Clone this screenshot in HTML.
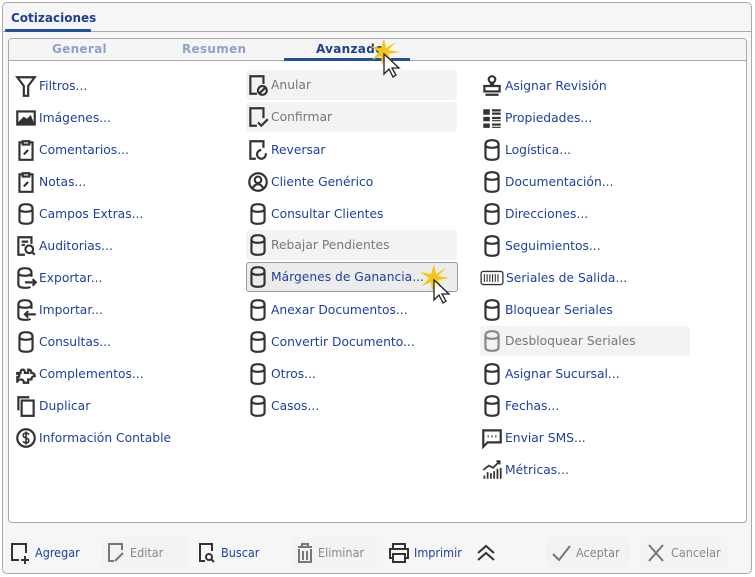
<!DOCTYPE html>
<html><head><meta charset="utf-8"><style>
*{margin:0;padding:0;box-sizing:border-box}
body{width:755px;height:577px;background:#fff;font-family:"DejaVu Sans","Liberation Sans",sans-serif;position:relative;overflow:hidden}
.outer{position:absolute;left:2px;top:2px;width:750px;height:572px;background:#f6f6f6;border:1px solid #aaa;border-radius:5px}
.tabline{position:absolute;left:2px;top:31px;width:750px;height:1px;background:#aaa}
.maintab{position:absolute;left:11px;top:11px;font-size:12px;font-weight:bold;color:#1f3f8f}
.maintabbar{position:absolute;left:5px;top:29px;width:86px;height:3px;background:#1f4fa0;border-radius:1px}
.inner{position:absolute;left:8px;top:38px;width:739px;height:485px;background:#fff;border:1px solid #aaa;border-radius:4px;overflow:hidden}
.ihead{position:absolute;left:0;top:0;width:100%;height:22px;background:#f5f5f5;border-bottom:1px solid #aaa}
.st{position:absolute;top:3px;font-size:12px;font-weight:bold;color:#8ea3c9;letter-spacing:.3px}
.row{position:absolute;height:30px;display:flex;align-items:center;font-size:12.3px;color:#1f3f9c;white-space:nowrap}
.row svg{width:22px;height:24px;margin-right:2px;flex:none}
.dis{color:#777;background:#f3f3f3;border-radius:3px}
.hov{background:#ececec;border:1px solid #999;border-radius:3px;color:#1f3f9c}
.btn{position:absolute;top:537px;height:31px;display:flex;align-items:center;font-family:"DejaVu Sans Condensed","DejaVu Sans",sans-serif;font-size:12.5px;color:#1f3f9c;white-space:nowrap}
.btn svg{margin-right:4px}
.bd{background:#f3f3f3;color:#888;border-radius:3px;padding-left:4px}
svg{stroke:#333;fill:none;stroke-width:2}
</style></head><body>
<svg width="0" height="0" style="position:absolute">
<defs>
<symbol id="cyl" viewBox="0 0 20 22"><path d="M4 6 Q4 2 10 2 Q16 2 16 6 V17 Q16 20 10 20 Q4 20 4 17 Z M4 6 Q4 9 10 9 Q16 9 16 6"/></symbol>
<symbol id="clip" viewBox="0 0 20 22"><path d="M7 4H4V20H16V4H13M7 3H13V6H7Z M8 15L12 11"/></symbol>
</defs></svg>
<div class="outer"></div>
<div class="tabline"></div>
<div class="maintab">Cotizaciones</div>
<div class="maintabbar"></div>
<div class="inner">
 <div class="ihead"></div>
 <div class="st" style="left:43px">General</div>
 <div class="st" style="left:173px">Resumen</div>
 <div class="st" style="left:307px;color:#1f3f8f">Avanzado</div>
 <div style="position:absolute;left:275px;top:19px;width:126px;height:3px;background:#1f4fa0"></div>
</div>
<!-- left column -->
<div class="row" style="left:15px;top:71px"><svg viewBox="0 0 20 22"><path d="M2 3H18L12 11V20H8V11Z"/></svg>Filtros...</div>
<div class="row" style="left:15px;top:103px"><svg viewBox="0 0 20 22"><rect x="2" y="5" width="16" height="12"/><path d="M4 15L8 11L11 13L14 10L16 15Z" fill="#333"/></svg>Imágenes...</div>
<div class="row" style="left:15px;top:135px"><svg><use href="#clip"/></svg>Comentarios...</div>
<div class="row" style="left:15px;top:167px"><svg><use href="#clip"/></svg>Notas...</div>
<div class="row" style="left:15px;top:199px"><svg><use href="#cyl"/></svg>Campos Extras...</div>
<div class="row" style="left:15px;top:231px"><svg viewBox="0 0 20 22"><path d="M9 19H3V3H15V9 M6 7H12M6 10H9"/><circle cx="13" cy="14" r="3.5"/><path d="M15.5 16.5L18 19"/></svg>Auditorias...</div>
<div class="row" style="left:15px;top:263px"><svg viewBox="0 0 20 22"><path d="M15 10V6Q15 2 9 2Q3 2 3 6V17Q3 20 9 20Q13 20 14 19 M3 6Q3 9 9 9Q15 9 15 6 M9 15H19M16 12L19 15L16 18"/></svg>Exportar...</div>
<div class="row" style="left:15px;top:295px"><svg viewBox="0 0 20 22"><path d="M15 10V6Q15 2 9 2Q3 2 3 6V17Q3 20 9 20Q13 20 14 19 M3 6Q3 9 9 9Q15 9 15 6 M19 15H9M12 12L9 15L12 18"/></svg>Importar...</div>
<div class="row" style="left:15px;top:327px"><svg><use href="#cyl"/></svg>Consultas...</div>
<div class="row" style="left:15px;top:359px"><svg viewBox="0 0 20 22"><path d="M2 10H5Q5 7 7 7Q9 7 9 10H12V7Q15 7 15 10Q18 10 18 13Q15 13 15 16H12V19H8Q8 16 5 16Q2 16 2 19V14Q4 14 4 12Q4 11 2 11Z"/></svg>Complementos...</div>
<div class="row" style="left:15px;top:391px"><svg viewBox="0 0 20 22"><path d="M3 15V3H13"/><rect x="6" y="6" width="11" height="14"/></svg>Duplicar</div>
<div class="row" style="left:15px;top:423px"><svg viewBox="0 0 20 22"><circle cx="10" cy="11" r="8"/><path d="M12.5 8Q12 6.5 10 6.5Q7.5 6.5 7.5 8.5Q7.5 10.5 10 11Q12.5 11.5 12.5 13.5Q12.5 15.5 10 15.5Q8 15.5 7.5 14 M10 5V17" stroke-width="1.5"/></svg>Información Contable</div>
<!-- middle column -->
<div class="row dis" style="left:246px;top:70px;width:211px;padding-left:1px"><svg viewBox="0 0 20 22"><path d="M9 19H3V3H15V10"/><circle cx="14" cy="16" r="4"/><path d="M11.5 18.5L16.5 13.5"/></svg>Anular</div>
<div class="row dis" style="left:246px;top:102px;width:211px;padding-left:1px"><svg viewBox="0 0 20 22"><path d="M9 19H3V3H15V12 M10 16L13 19L19 13"/></svg>Confirmar</div>
<div class="row" style="left:247px;top:135px"><svg viewBox="0 0 20 22"><path d="M8 19H3V3H15V9 M17 14A4 4 0 1 1 13 11"/></svg>Reversar</div>
<div class="row" style="left:247px;top:167px"><svg viewBox="0 0 20 22"><circle cx="10" cy="11" r="8"/><circle cx="10" cy="9" r="3"/><path d="M5 17Q7 13 10 13Q13 13 15 17"/></svg>Cliente Genérico</div>
<div class="row" style="left:247px;top:199px"><svg><use href="#cyl"/></svg>Consultar Clientes</div>
<div class="row dis" style="left:246px;top:230px;width:211px;padding-left:1px"><svg><use href="#cyl"/></svg>Rebajar Pendientes</div>
<div class="row hov" style="left:246px;top:262px;width:212px;padding-left:0px"><svg><use href="#cyl"/></svg>Márgenes de Ganancia...</div>
<div class="row" style="left:247px;top:295px"><svg><use href="#cyl"/></svg>Anexar Documentos...</div>
<div class="row" style="left:247px;top:327px"><svg><use href="#cyl"/></svg>Convertir Documento...</div>
<div class="row" style="left:247px;top:359px"><svg><use href="#cyl"/></svg>Otros...</div>
<div class="row" style="left:247px;top:391px"><svg><use href="#cyl"/></svg>Casos...</div>
<!-- right column -->
<div class="row" style="left:481px;top:71px"><svg viewBox="0 0 20 22"><circle cx="10" cy="5" r="3"/><path d="M9 8V11H11V8 M3 11H17V16H3Z M4 19H16"/></svg>Asignar Revisión</div>
<div class="row" style="left:481px;top:103px"><svg viewBox="0 0 20 22" style="fill:#333;stroke:none"><path d="M2 3H8V8H2ZM10 3H18V5H10ZM10 6H18V8H10ZM2 10H8V14H2ZM10 10H18V12H10ZM10 13H18V14H10ZM2 16H8V20H2ZM10 16H18V18H10ZM10 19H18V20H10Z"/></svg>Propiedades...</div>
<div class="row" style="left:481px;top:135px"><svg><use href="#cyl"/></svg>Logística...</div>
<div class="row" style="left:481px;top:167px"><svg><use href="#cyl"/></svg>Documentación...</div>
<div class="row" style="left:481px;top:199px"><svg><use href="#cyl"/></svg>Direcciones...</div>
<div class="row" style="left:481px;top:231px"><svg><use href="#cyl"/></svg>Seguimientos...</div>
<div class="row" style="left:480px;top:263px"><svg viewBox="0 0 22 22" style="width:24px"><rect x="1" y="5" width="20" height="12" rx="2" stroke-width="1.2"/><path d="M4 7.5V14.5M6.5 7.5V14.5M9 7.5V14.5M11.5 7.5V14.5M14 7.5V14.5M16.5 7.5V14.5" stroke-width="1"/></svg>Seriales de Salida...</div>
<div class="row" style="left:481px;top:295px"><svg><use href="#cyl"/></svg>Bloquear Seriales</div>
<div class="row dis" style="left:480px;top:326px;width:210px;padding-left:1px"><svg style="stroke:#888"><use href="#cyl"/></svg>Desbloquear Seriales</div>
<div class="row" style="left:481px;top:359px"><svg><use href="#cyl"/></svg>Asignar Sucursal...</div>
<div class="row" style="left:481px;top:391px"><svg><use href="#cyl"/></svg>Fechas...</div>
<div class="row" style="left:481px;top:423px"><svg viewBox="0 0 20 22"><path d="M2 4H18V15H6L2 19Z M6 9.5H7M9.5 9.5H10.5M13 9.5H14"/></svg>Enviar SMS...</div>
<div class="row" style="left:481px;top:455px"><svg viewBox="0 0 20 22"><path d="M2 11L7 7L11 9L17 3M14 3H17V6 M3 19V16M6 19V13M9 19V14M12 19V12M15 19V10M18 19V9" stroke-width="1.6"/></svg>Métricas...</div>
<!-- footer -->
<div class="btn" style="left:9px"><svg width="22" height="24" viewBox="0 0 22 24"><path d="M10 19H3V3H17V12 M16 15V23M12 19H20"/></svg>Agregar</div>
<div class="btn bd" style="left:102px;width:85px"><svg width="20" height="24" viewBox="0 0 20 24" style="stroke:#777"><path d="M8 20H3V3H16V9 M9 20L17 12"/></svg>Editar</div>
<div class="btn" style="left:197px"><svg width="20" height="24" viewBox="0 0 20 24"><path d="M8 20H3V3H15V10"/><circle cx="12" cy="16" r="3"/><path d="M14 18L17 21"/></svg>Buscar</div>
<div class="btn bd" style="left:292px;width:85px"><svg width="18" height="24" viewBox="0 0 18 24" style="stroke:#777"><path d="M2 6H16M6 6V3H12V6M3 8V21H15V8M7 10V19M11 10V19"/></svg>Eliminar</div>
<div class="btn" style="left:388px"><svg width="22" height="24" viewBox="0 0 22 24"><path d="M5 8V3H17V8 M5 17H2V8H20V17H17 M5 13H17V21H5Z"/></svg>Imprimir</div>
<div class="btn" style="left:474px"><svg width="24" height="24" viewBox="0 0 24 24"><path d="M4 12L12 5L20 12M4 19L12 12L20 19" stroke-width="2"/></svg></div>
<div class="btn bd" style="left:546px;width:84px"><svg width="22" height="24" viewBox="0 0 22 24" style="stroke:#777"><path d="M3 13L9 19L20 5"/></svg>Aceptar</div>
<div class="btn bd" style="left:641px;width:86px"><svg width="22" height="24" viewBox="0 0 22 24" style="stroke:#777"><path d="M4 4L18 20M18 4L4 20"/></svg>Cancelar</div>
<!-- cursors -->
<svg width="40" height="40" viewBox="0 0 40 40" style="position:absolute;left:368px;top:38px;stroke:none">
<path d="M16 0L18 10L28 4L20 12L32 14L20 16L26 26L17 18L14 28L13 18L4 22L11 14L2 8L13 10Z" fill="#f5c518"/>
<path d="M16 16V36L21 31L25 39L28 37L24 30L31 30Z" fill="#fff" stroke="#222" stroke-width="1.3"/></svg>
<svg width="40" height="40" viewBox="0 0 40 40" style="position:absolute;left:418px;top:264px;stroke:none">
<path d="M16 0L18 10L28 4L20 12L32 14L20 16L26 26L17 18L14 28L13 18L4 22L11 14L2 8L13 10Z" fill="#f5c518"/>
<path d="M16 16V36L21 31L25 39L28 37L24 30L31 30Z" fill="#fff" stroke="#222" stroke-width="1.3"/></svg>
</body></html>
